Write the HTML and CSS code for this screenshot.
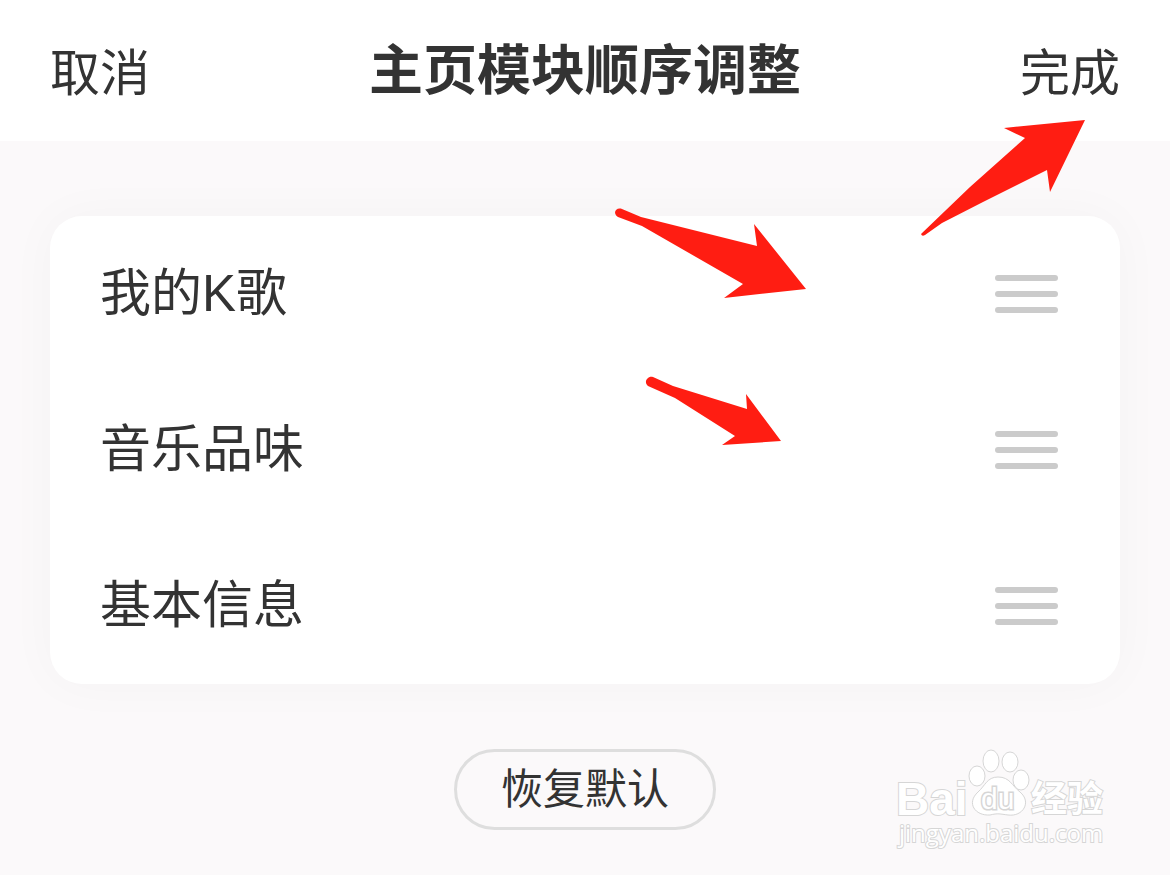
FILE: index.html
```html
<!DOCTYPE html>
<html lang="zh-CN">
<head>
<meta charset="utf-8">
<meta name="viewport" content="width=device-width, initial-scale=1">
<title>主页模块顺序调整</title>
<link rel="stylesheet" href="styles.css">
</head>
<body>
<header class="topbar">
  <button class="action" type="button">取消</button>
  <h1 class="title">主页模块顺序调整</h1>
  <button class="action action-done" type="button">完成</button>
</header>
<main class="content">
  <ul class="card">
    <li class="row">
      <span class="label">我的K歌</span>
      <button class="handle" type="button" aria-label="拖动我的K歌"><span class="bar"></span><span class="bar"></span><span class="bar"></span></button>
    </li>
    <li class="row">
      <span class="label">音乐品味</span>
      <button class="handle" type="button" aria-label="拖动音乐品味"><span class="bar"></span><span class="bar"></span><span class="bar"></span></button>
    </li>
    <li class="row">
      <span class="label">基本信息</span>
      <button class="handle" type="button" aria-label="拖动基本信息"><span class="bar"></span><span class="bar"></span><span class="bar"></span></button>
    </li>
  </ul>
  <button class="reset" type="button">恢复默认</button>
</main>
<svg class="arrow arrow-done" viewBox="900 40 270 210" width="270" height="210" aria-hidden="true">
  <path d="M1085 120 1004 128 1025 138 970 187 921 234Q922 237 925 235L942 223 983 202 1047 170 1050 192Z"/>
</svg>
<svg class="arrow arrow-first" viewBox="600 190 230 120" width="230" height="120" aria-hidden="true">
  <path d="M622 209 641 217 757 246 754 224 806 289 724 298 743 284 642 226 618 217C612 213 616 207 622 209Z"/>
</svg>
<svg class="arrow arrow-second" viewBox="630 365 170 95" width="170" height="95" aria-hidden="true">
  <path d="M653 377 673 386 747 409 746 394 781 441 722 445 735 436 675 398 648 386C643 382 648 375 653 377Z"/>
</svg>
<svg class="watermark" viewBox="0 0 250 130" width="250" height="130" role="img" aria-label="Baidu 经验">
  <g class="wm-shape">
    <ellipse cx="97" cy="41" rx="8" ry="10"/>
    <ellipse cx="111" cy="26" rx="8" ry="11"/>
    <ellipse cx="130" cy="27" rx="8" ry="10"/>
    <ellipse cx="141" cy="45" rx="8" ry="10"/>
    <path d="M118 42C107 42 105 51 98 57C86 68 95 81 110 80C118 78 120 79 128 80C143 82 152 67 140 57C132 51 130 42 118 42Z"/>
  </g>
  <text class="wm-logo" x="16" y="80">Bai</text>
  <text class="wm-du" x="101" y="74">du</text>
  <text class="wm-cn" x="151" y="77">经验</text>
  <text class="wm-url" x="19" y="107">jingyan.baidu.com</text>
</svg>
</body>
</html>
```
FILE: styles.css
```css
* {
  box-sizing: border-box;
}

body {
  position: relative;
  margin: 0;
  min-height: 100vh;
  background: #fbf9fa;
  color: #333;
  font-family: "Liberation Sans", "Noto Sans CJK SC", sans-serif;
}

button {
  padding: 0;
  border: 0;
  background: none;
  color: inherit;
  font-family: inherit;
}

.topbar {
  display: grid;
  grid-template-columns: 1fr auto 1fr;
  align-items: end;
  padding: 35px 50px 31px;
  background: #fff;
}

.action {
  justify-self: start;
  font-size: 50px;
  line-height: 72px;
}

.action-done {
  justify-self: end;
}

.title {
  margin: 0;
  padding-bottom: 3px;
  font-size: 54px;
  font-weight: 700;
  line-height: 72px;
}

.content {
  display: flex;
  flex-direction: column;
  align-items: center;
  gap: 65px;
  padding: 75px 50px 45px;
}

.card {
  align-self: stretch;
  margin: 0;
  padding: 0;
  border-radius: 32px;
  background: #fff;
  box-shadow: 0 0 50px rgba(0, 20, 10, 0.03);
  list-style: none;
}

.row {
  display: flex;
  align-items: center;
  justify-content: space-between;
  height: 156px;
  padding: 0 62px 0 50px;
}

.label {
  font-size: 51px;
  line-height: 74px;
}

.handle {
  display: flex;
  flex-direction: column;
  gap: 10px;
  width: 63px;
}

.bar {
  height: 6px;
  border-radius: 3px;
  background: #cbcbcb;
}

.reset {
  padding: 0 44px;
  border: 3px solid #dedede;
  border-radius: 41px;
  font-size: 42px;
  line-height: 75px;
}

.arrow {
  position: absolute;
  fill: #ff1d12;
  pointer-events: none;
}

.arrow-done {
  top: 40px;
  right: 0;
}

.arrow-first {
  top: 190px;
  left: 600px;
}

.arrow-second {
  top: 365px;
  left: 630px;
}

.watermark {
  position: absolute;
  top: 735px;
  right: 40px;
  fill: #fff;
  stroke: #d6d6d6;
  stroke-width: 1;
  pointer-events: none;
}

.watermark text {
  paint-order: stroke;
  stroke-width: 2;
}

.wm-logo {
  font-size: 46px;
  font-weight: 700;
}

.watermark .wm-du {
  font-size: 30px;
  stroke-width: 3;
}

.wm-cn {
  font-size: 36px;
  font-weight: 700;
}

.wm-url {
  font-family: "Open Sans", sans-serif;
  font-size: 24px;
}
```
